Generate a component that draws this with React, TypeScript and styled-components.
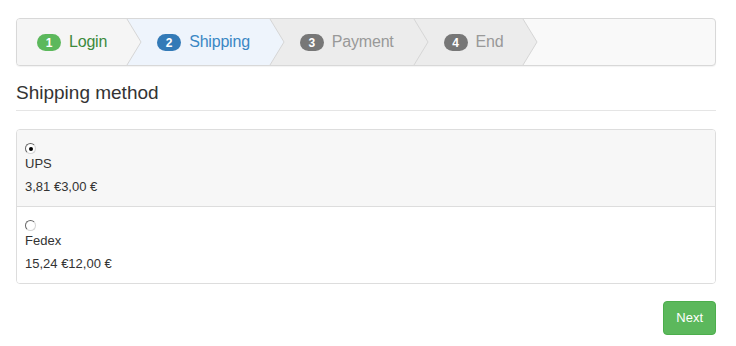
import React, { useState } from "react";
import styled, { createGlobalStyle } from "styled-components";

type StepState = "done" | "active" | "todo";

type Step = {
  label: string;
  state: StepState;
};

type Method = {
  id: string;
  name: string;
  price: string;
};

const steps: Step[] = [
  { label: "Login", state: "done" },
  { label: "Shipping", state: "active" },
  { label: "Payment", state: "todo" },
  { label: "End", state: "todo" },
];

const methods: Method[] = [
  { id: "ups", name: "UPS", price: "3,81 €3,00 €" },
  { id: "fedex", name: "Fedex", price: "15,24 €12,00 €" },
];

const palette = {
  done: { bg: "#f5f5f5", text: "#3c8a3c", badge: "#5cb85c" },
  active: { bg: "#eef4fc", text: "#3a87c4", badge: "#337ab7" },
  todo: { bg: "#ececec", text: "#999999", badge: "#777777" },
};

const GlobalStyle = createGlobalStyle`
  body {
    margin: 0;
    background: #ffffff;
    font-family: "Liberation Sans", Arial, sans-serif;
    color: #333333;
  }
`;

const Page = styled.div`
  width: 700px;
  padding: 18px 20px 0 16px;
`;

const Wizard = styled.div`
  display: flex;
  height: 46px;
  border: 1px solid #d8d8d8;
  border-radius: 4px;
  background: #f9f9f9;
  box-shadow: 0 1px 1px rgba(0, 0, 0, 0.05);
`;

const StepItem = styled.div<{ $state: StepState; $first: boolean }>`
  position: relative;
  display: flex;
  align-items: center;
  gap: 8px;
  padding: 0 20px 0 ${(p) => (p.$first ? 20 : 30)}px;
  background: ${(p) => palette[p.$state].bg};
  color: ${(p) => palette[p.$state].text};
  font-size: 16px;
  letter-spacing: -0.2px;
  border-radius: ${(p) => (p.$first ? "3px 0 0 3px" : "0")};
`;

const Badge = styled.span<{ $state: StepState }>`
  display: inline-block;
  min-width: 10px;
  padding: 3px 7px 2px;
  border-radius: 9px;
  background: ${(p) => palette[p.$state].badge};
  color: #ffffff;
  font-size: 12px;
  font-weight: bold;
  line-height: 12px;
  letter-spacing: 0;
  text-align: center;
`;

const Chevron = styled.svg`
  position: absolute;
  top: 0;
  left: 100%;
  width: 14px;
  height: 100%;
  z-index: 1;
  overflow: visible;
`;

const Heading = styled.h3`
  margin: 0;
  padding: 15px 0 6px;
  font-size: 19px;
  font-weight: normal;
  line-height: 23px;
  color: #333333;
  border-bottom: 1px solid #e5e5e5;
`;

const List = styled.div`
  margin-top: 18px;
  border: 1px solid #dddddd;
  border-radius: 4px;
  overflow: hidden;
`;

const Option = styled.label<{ $selected: boolean }>`
  display: block;
  padding: 13px 8px 11px;
  background: ${(p) => (p.$selected ? "#f7f7f7" : "#ffffff")};
  font-size: 13px;
  line-height: 16px;
  color: #333333;
  & + & {
    border-top: 1px solid #dddddd;
  }
`;

const Radio = styled.input`
  appearance: none;
  display: block;
  box-sizing: border-box;
  width: 11px;
  height: 11px;
  margin: 0 0 2px;
  border: 1px solid;
  border-color: #666666 #d4d4d4 #d4d4d4 #666666;
  border-radius: 50%;
  background: #ffffff;
  position: relative;
  &:checked::after {
    content: "";
    position: absolute;
    top: 2.5px;
    left: 2.5px;
    width: 4px;
    height: 4px;
    border-radius: 50%;
    background: #000000;
  }
`;

const Price = styled.div`
  margin-top: 7px;
`;

const Footer = styled.div`
  display: flex;
  justify-content: flex-end;
  margin-top: 17px;
`;

const NextButton = styled.button`
  padding: 6px 12px;
  border: 1px solid #4cae4c;
  border-radius: 4px;
  background: #5cb85c;
  color: #ffffff;
  font-family: "Liberation Sans", Arial, sans-serif;
  font-size: 13px;
  line-height: 20px;
  cursor: pointer;
`;

export default function App() {
  const [selected, setSelected] = useState("ups");

  return (
    <Page>
      <GlobalStyle />
      <Wizard>
        {steps.map((step, i) => (
          <StepItem key={step.label} $state={step.state} $first={i === 0}>
            <Badge $state={step.state}>{i + 1}</Badge>
            {step.label}
            <Chevron viewBox="0 0 14 46" preserveAspectRatio="none">
              <polygon points="0,0 14,23 0,46" fill={palette[step.state].bg} />
              <polyline points="0,0 14,23 0,46" fill="none" stroke="#d6d6d6" strokeWidth="1" />
            </Chevron>
          </StepItem>
        ))}
      </Wizard>

      <Heading>Shipping method</Heading>

      <List>
        {methods.map((m) => (
          <Option key={m.id} $selected={selected === m.id}>
            <Radio
              type="radio"
              name="shipping"
              checked={selected === m.id}
              onChange={() => setSelected(m.id)}
            />
            <div>{m.name}</div>
            <Price>{m.price}</Price>
          </Option>
        ))}
      </List>

      <Footer>
        <NextButton>Next</NextButton>
      </Footer>
    </Page>
  );
}
